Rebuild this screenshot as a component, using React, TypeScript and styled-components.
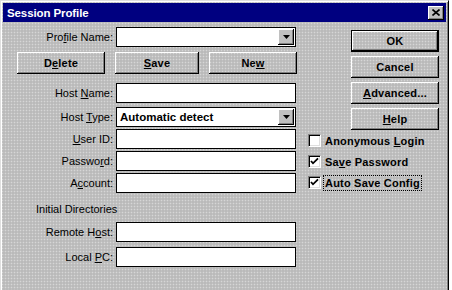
import React from "react";
import styled, { createGlobalStyle, css } from "styled-components";

const GlobalStyle = createGlobalStyle`
  html, body { margin: 0; padding: 0; background: #ffffff; }
  body { font-family: "Liberation Sans", Arial, sans-serif; color: #000; }
  * { box-sizing: border-box; }
`;

const dither = css`
  background-color: #bababa;
  background-image: radial-gradient(circle, #d6d6d6 0.7px, transparent 1.1px);
  background-size: 3px 3px;
`;

const Window = styled.div`
  width: 449px;
  height: 292px;
  border: 1px solid;
  border-color: #dfdfdf #000 #000 #dfdfdf;
  box-shadow: inset 1px 1px #fff, inset -1px -1px #808080;
  padding: 2px;
  display: flex;
  flex-direction: column;
  ${dither};
`;

const TitleBar = styled.div`
  height: 19px;
  background: #000080;
  display: flex;
  align-items: center;
  justify-content: space-between;
  padding: 0 2px 0 4px;
`;

const Title = styled.span`
  color: #fff;
  font-weight: bold;
  font-size: 11.5px;
  letter-spacing: -0.1px;
`;

const CloseBtn = styled.div`
  width: 16px;
  height: 14px;
  background: #c0c0c0;
  box-shadow: inset -1px -1px #000, inset 1px 1px #fff, inset -2px -2px #808080;
  display: flex;
  align-items: center;
  justify-content: center;
`;

const Body = styled.div`
  display: flex;
`;

const LeftCol = styled.div`
  width: 294px;
  display: flex;
  flex-direction: column;
`;

const RightCol = styled.div`
  margin-left: 11px;
  display: flex;
  flex-direction: column;
`;

const FormRow = styled.div<{ $mt: number }>`
  display: grid;
  grid-template-columns: 110px 180px;
  column-gap: 3px;
  align-items: center;
  height: 20px;
  margin-top: ${(p) => p.$mt}px;
`;

const Label = styled.span`
  text-align: right;
  font-size: 11px;
  white-space: nowrap;
`;

const SectionLabel = styled.div<{ $mt: number }>`
  margin-top: ${(p) => p.$mt}px;
  margin-left: 33px;
  height: 14px;
  line-height: 14px;
  font-size: 11px;
`;

const Field = styled.div`
  height: 20px;
  background: #fff;
  border: 1px solid #000;
  display: flex;
  align-items: center;
  padding-left: 3px;
`;

const FieldText = styled.span`
  flex: 1;
  font-weight: bold;
  font-size: 11.5px;
`;

const DropBtn = styled.div`
  width: 16px;
  height: 16px;
  margin-right: 1px;
  background: #c0c0c0;
  box-shadow: inset -1px -1px #000, inset 1px 1px #fff, inset -2px -2px #808080;
  display: flex;
  align-items: center;
  justify-content: center;
  margin-left: auto;
`;

const ButtonRow = styled.div`
  display: flex;
  gap: 10px;
  margin-top: 5px;
  padding-left: 14px;
`;

const Button = styled.div<{ $w: number; $mt?: number; $default?: boolean; $ml?: number }>`
  width: ${(p) => p.$w}px;
  height: 22px;
  margin-top: ${(p) => p.$mt ?? 0}px;
  margin-left: ${(p) => p.$ml ?? 0}px;
  background: #c0c0c0;
  ${dither};
  display: flex;
  align-items: center;
  justify-content: center;
  font-weight: bold;
  font-size: 11px;
  letter-spacing: 0.2px;
  box-shadow: inset -1px -1px #000, inset 1px 1px #fff, inset -2px -2px #808080;
  ${(p) =>
    p.$default &&
    css`
      border: 1px solid #000;
      box-shadow: inset -1px -1px #000, inset 1px 1px #fff, inset -2px -2px #808080;
    `}
`;

const U = styled.span`
  text-decoration: underline;
  text-underline-offset: 1px;
`;

const CheckGroup = styled.div`
  display: flex;
  flex-direction: column;
  margin-top: 0px;
`;

const CheckRow = styled.div`
  height: 21px;
  display: flex;
  align-items: center;
  gap: 2px;
`;

const Box = styled.div`
  width: 13px;
  height: 13px;
  background: #fff;
  border: 1px solid;
  border-color: #808080 #fff #fff #808080;
  box-shadow: inset 1px 1px #000, inset -1px -1px #dfdfdf;
  display: flex;
  align-items: center;
  justify-content: center;
`;

const CheckLabel = styled.span<{ $focus?: boolean }>`
  font-weight: bold;
  font-size: 11px;
  letter-spacing: 0.2px;
  padding: 1px 1px;
  border: 1px dotted ${(p) => (p.$focus ? "#000" : "transparent")};
`;

const Tri = () => (
  <svg width="7" height="4" viewBox="0 0 7 4">
    <polygon points="0,0 7,0 3.5,4" fill="#000" />
  </svg>
);

const Check = () => (
  <svg width="9" height="9" viewBox="0 0 9 9">
    <path d="M1 4 L3 6.3 L8 1.3" stroke="#000" strokeWidth="1.8" fill="none" />
  </svg>
);

const Combo = ({ text }: { text?: string }) => (
  <Field>
    <FieldText>{text}</FieldText>
    <DropBtn>
      <Tri />
    </DropBtn>
  </Field>
);

export default function App() {
  return (
    <>
      <GlobalStyle />
      <Window>
        <TitleBar>
          <Title>Session Profile</Title>
          <CloseBtn>
            <svg width="8" height="7" viewBox="0 0 8 7">
              <path d="M0.5 0.5 L7.5 6.5 M7.5 0.5 L0.5 6.5" stroke="#000" strokeWidth="1.6" />
            </svg>
          </CloseBtn>
        </TitleBar>
        <Body>
          <LeftCol>
            <FormRow $mt={5}>
              <Label>Pro<U>f</U>ile Name:</Label>
              <Combo />
            </FormRow>
            <ButtonRow>
              <Button $w={88}>D<U>e</U>lete</Button>
              <Button $w={84}><U>S</U>ave</Button>
              <Button $w={88}>Ne<U>w</U></Button>
            </ButtonRow>
            <FormRow $mt={9}>
              <Label>Host <U>N</U>ame:</Label>
              <Field />
            </FormRow>
            <FormRow $mt={4}>
              <Label>Host <U>T</U>ype:</Label>
              <Combo text="Automatic detect" />
            </FormRow>
            <FormRow $mt={2}>
              <Label><U>U</U>ser ID:</Label>
              <Field />
            </FormRow>
            <FormRow $mt={2}>
              <Label>Passwo<U>r</U>d:</Label>
              <Field />
            </FormRow>
            <FormRow $mt={2}>
              <Label>A<U>c</U>count:</Label>
              <Field />
            </FormRow>
            <SectionLabel $mt={9}>Initial Directories</SectionLabel>
            <FormRow $mt={6}>
              <Label>Remote H<U>o</U>st:</Label>
              <Field />
            </FormRow>
            <FormRow $mt={5}>
              <Label>Local <U>P</U>C:</Label>
              <Field />
            </FormRow>
          </LeftCol>
          <RightCol>
            <Button $w={88} $ml={43} $mt={8} $default>OK</Button>
            <Button $w={88} $ml={43} $mt={4}>Cancel</Button>
            <Button $w={88} $ml={43} $mt={4}><U>A</U>dvanced...</Button>
            <Button $w={88} $ml={43} $mt={4}><U>H</U>elp</Button>
            <CheckGroup>
              <CheckRow>
                <Box />
                <CheckLabel>Anonymous <U>L</U>ogin</CheckLabel>
              </CheckRow>
              <CheckRow>
                <Box><Check /></Box>
                <CheckLabel>Sa<U>v</U>e Password</CheckLabel>
              </CheckRow>
              <CheckRow>
                <Box><Check /></Box>
                <CheckLabel $focus>Auto Save Config</CheckLabel>
              </CheckRow>
            </CheckGroup>
          </RightCol>
        </Body>
      </Window>
    </>
  );
}
